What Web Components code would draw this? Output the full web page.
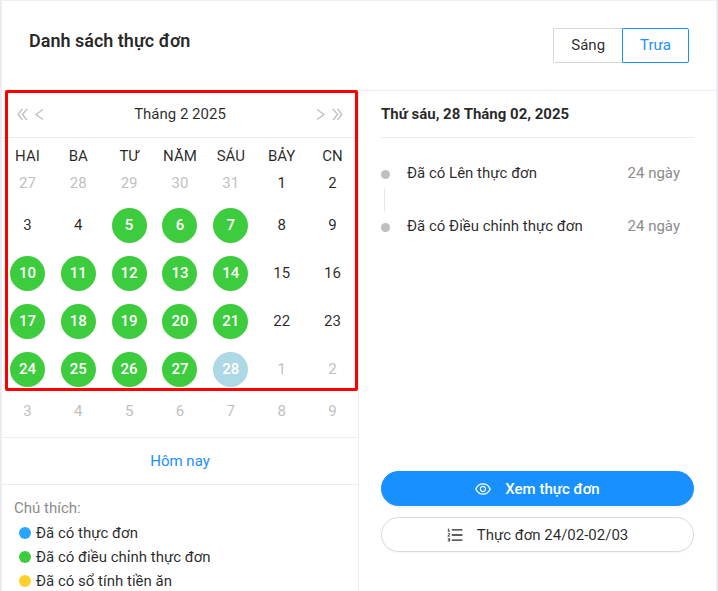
<!DOCTYPE html>
<html lang="vi">
<head>
<meta charset="utf-8">
<meta name="viewport" content="width=device-width, initial-scale=1">
<title>Danh sách thực đơn</title>
<style>
  html {
    background: #ebecf2;
    overflow-x: hidden;
    scrollbar-width: none;
  }

  body {
    margin: 0;
    font: 15px/24px Roboto, "Liberation Sans", sans-serif;
    color: rgba(0, 0, 0, 0.85);
    --line: #ededf0;
    --blue: #1890ff;
    --green: #3dcc3d;
    --muted: #8c8c8c;
    --faint: #bfbfbf;
  }
</style>
</head>
<body>
<menu-card>
  <h1 slot="title">Danh sách thực đơn</h1>
  <meal-switch slot="extra" options="Sáng,Trưa" value="Trưa"></meal-switch>
  <menu-calendar slot="side" year="2025" month="2" selected="28" menu-from="5"></menu-calendar>
  <menu-legend slot="side" heading="Chú thích:">
    <legend-item color="#29a6ff">Đã có thực đơn</legend-item>
    <legend-item color="#3dcc3d">Đã có điều chỉnh thực đơn</legend-item>
    <legend-item color="#ffd02b">Đã có sổ tính tiền ăn</legend-item>
  </menu-legend>
  <day-detail>
    <span slot="date">Thứ sáu, 28 Tháng 02, 2025</span>
    <time-item time="24 ngày">Đã có Lên thực đơn</time-item>
    <time-item time="24 ngày" last>Đã có Điều chỉnh thực đơn</time-item>
    <round-button slot="actions" icon="eye" primary>Xem thực đơn</round-button>
    <round-button slot="actions" icon="list">Thực đơn 24/02-02/03</round-button>
  </day-detail>
</menu-card>

<script>
class MenuCard extends HTMLElement {
  constructor() {
    super();
    const shadow = this.attachShadow({ mode: 'open' });
    shadow.innerHTML = `
    <style>
      :host {
        display: flex;
        flex-direction: column;
        box-sizing: border-box;
        min-height: 100vh;
        margin: 0 2px;
        border-top: 1px solid #f0f0f4;
        background: #fff;
      }

      header {
        display: flex;
        align-items: center;
        justify-content: space-between;
        padding: 27px;
        border-bottom: 1px solid var(--line);
      }

      ::slotted(h1) {
        margin: 0 0 10px;
        font-size: 18px;
        font-weight: 600;
        line-height: 24px;
      }

      .body {
        flex: 1;
        display: grid;
        grid-template-columns: 1fr 1fr;
      }

      .side {
        border-right: 1px solid var(--line);
      }
    </style>
    <header>
      <slot name="title"></slot>
      <slot name="extra"></slot>
    </header>
    <div class="body">
      <div class="side"><slot name="side"></slot></div>
      <slot></slot>
    </div>
`;
  }
}

customElements.define('menu-card', MenuCard);

class MealSwitch extends HTMLElement {
  constructor() {
    super();
    const shadow = this.attachShadow({ mode: 'open' });
    const value = this.getAttribute('value');
    const options = this.getAttribute('options').split(',');
    shadow.innerHTML = `
    <style>
      :host {
        display: block;
      }

      div {
        display: flex;
      }

      input {
        position: absolute;
        opacity: 0;
        margin: 0;
      }

      label {
        padding: 0 17px;
        border: 1px solid #d9d9d9;
        line-height: 33px;
        cursor: pointer;
      }

      label:first-of-type {
        border-right: 0;
        border-radius: 2px 0 0 2px;
      }

      label:last-of-type {
        border-radius: 0 2px 2px 0;
      }

      input:checked + label {
        border-color: var(--blue);
        color: var(--blue);
      }
    </style>
    <div role="radiogroup">
      ${options.map((option, i) => `
        <input type="radio" name="meal" id="meal-${i}" ${option === value ? 'checked' : ''}>
        <label for="meal-${i}">${option}</label>
      `).join('')}
    </div>
`;
  }
}

customElements.define('meal-switch', MealSwitch);

class MenuCalendar extends HTMLElement {
  constructor() {
    super();
    const shadow = this.attachShadow({ mode: 'open' });
    shadow.innerHTML = `
    <style>
      :host {
        display: block;
        position: relative;
      }

      button {
        margin: 0;
        padding: 0;
        border: 0;
        background: none;
        color: inherit;
        font: inherit;
        cursor: pointer;
      }

      nav {
        display: flex;
        align-items: center;
        justify-content: space-between;
        height: 46px;
        padding: 0 14px;
        border-bottom: 1px solid var(--line);
      }

      .arrows {
        display: flex;
        gap: 5px;
      }

      .arrows button {
        display: flex;
        color: var(--faint);
      }

      svg {
        fill: none;
        stroke: currentColor;
        stroke-width: 1.3;
      }

      table {
        width: 100%;
        margin: 9px 0 8px;
        border-collapse: collapse;
        table-layout: fixed;
      }

      th, td {
        padding: 0;
        text-align: center;
        font-weight: 400;
      }

      th {
        line-height: 18px;
      }

      td {
        height: 36px;
      }

      td button {
        width: 35px;
        height: 24px;
      }

      tr.marked td {
        height: 48px;
      }

      .outside {
        color: var(--faint);
      }

      .menu, .selected {
        height: 35px;
        border-radius: 50%;
        background: var(--green);
        color: #fff;
        font-weight: 500;
      }

      .selected {
        background: lightblue;
      }

      .today {
        display: block;
        width: 100%;
        height: 48px;
        border: solid var(--line);
        border-width: 1px 0;
        color: var(--blue);
      }

      .frame {
        position: absolute;
        inset: -1px 0 auto 3px;
        height: 295px;
        border: 3px solid #f00;
        border-radius: 2px;
        pointer-events: none;
      }
    </style>
    <nav>
      <div class="arrows">
        <button aria-label="Năm trước"><svg width="13" height="13" viewBox="0 0 13 13"><path d="M6.5 1 2 6.5 6.5 12M11 1 6.5 6.5 11 12"/></svg></button>
        <button aria-label="Tháng trước"><svg width="11" height="13" viewBox="0 0 11 13"><path d="M9 1.5 2 6.5 9 11.5"/></svg></button>
      </div>
      <span class="month"></span>
      <div class="arrows">
        <button aria-label="Tháng sau"><svg width="11" height="13" viewBox="0 0 11 13"><path d="M2 1.5 9 6.5 2 11.5"/></svg></button>
        <button aria-label="Năm sau"><svg width="13" height="13" viewBox="0 0 13 13"><path d="M2 1 6.5 6.5 2 12M6.5 1 11 6.5 6.5 12"/></svg></button>
      </div>
    </nav>
    <table>
      <thead>
        <tr><th>HAI</th><th>BA</th><th>TƯ</th><th>NĂM</th><th>SÁU</th><th>BẢY</th><th>CN</th></tr>
      </thead>
      <tbody></tbody>
    </table>
    <button class="today">Hôm nay</button>
    <div class="frame"></div>
`;
    this.renderDays();
  }

  renderDays() {
    const year = Number(this.getAttribute('year'));
    const month = Number(this.getAttribute('month'));
    const selected = Number(this.getAttribute('selected'));
    const menuFrom = Number(this.getAttribute('menu-from'));
    // weeks start on Monday
    const offset = (new Date(year, month - 1, 1).getDay() + 6) % 7;
    let rows = '';

    for (let week = 0; week < 6; week++) {
      let cells = '';
      let marked = false;
      for (let day = 0; day < 7; day++) {
        const date = new Date(year, month - 1, 1 - offset + week * 7 + day);
        const number = date.getDate();
        let name = '';
        if (date.getMonth() !== month - 1) {
          name = 'outside';
        } else if (number === selected) {
          name = 'selected';
        } else if (day < 5 && number >= menuFrom) {
          name = 'menu';
        }
        marked = marked || name === 'menu';
        cells += `<td><button class="${name}">${number}</button></td>`;
      }
      rows += `<tr class="${marked ? 'marked' : ''}">${cells}</tr>`;
    }

    this.shadowRoot.querySelector('.month').textContent = `Tháng ${month} ${year}`;
    this.shadowRoot.querySelector('tbody').innerHTML = rows;
  }
}

customElements.define('menu-calendar', MenuCalendar);

class MenuLegend extends HTMLElement {
  constructor() {
    super();
    const shadow = this.attachShadow({ mode: 'open' });
    shadow.innerHTML = `
    <style>
      :host {
        display: block;
        padding: 11px 12px 0;
      }

      .heading {
        margin-bottom: 1px;
        color: var(--muted);
      }
    </style>
    <div class="heading">${this.getAttribute('heading')}</div>
    <slot></slot>
`;
  }
}

customElements.define('menu-legend', MenuLegend);

class LegendItem extends HTMLElement {
  constructor() {
    super();
    const shadow = this.attachShadow({ mode: 'open' });
    shadow.innerHTML = `
    <style>
      :host {
        display: flex;
        align-items: center;
        gap: 5px;
        padding-left: 5px;
      }

      i {
        width: 12px;
        height: 12px;
        border-radius: 50%;
        background: ${this.getAttribute('color')};
      }
    </style>
    <i></i><span><slot></slot></span>
`;
  }
}

customElements.define('legend-item', LegendItem);

class DayDetail extends HTMLElement {
  constructor() {
    super();
    const shadow = this.attachShadow({ mode: 'open' });
    shadow.innerHTML = `
    <style>
      :host {
        display: flex;
        flex-direction: column;
        padding: 0 22px 41px;
      }

      h2 {
        margin: 0 0 23px;
        border-bottom: 1px solid var(--line);
        font-size: 15px;
        font-weight: 700;
        line-height: 46px;
      }

      .actions {
        display: flex;
        flex-direction: column;
        gap: 11px;
        margin-top: auto;
      }
    </style>
    <h2><slot name="date"></slot></h2>
    <slot></slot>
    <div class="actions"><slot name="actions"></slot></div>
`;
  }
}

customElements.define('day-detail', DayDetail);

class TimeItem extends HTMLElement {
  constructor() {
    super();
    const shadow = this.attachShadow({ mode: 'open' });
    shadow.innerHTML = `
    <style>
      :host {
        display: flex;
        min-height: 53px;
        padding-right: 14px;
      }

      .rail {
        display: flex;
        flex-direction: column;
        width: 26px;
        padding: 9px 0 2px;
        box-sizing: border-box;
      }

      .rail::before {
        content: "";
        width: 9px;
        height: 9px;
        border-radius: 50%;
        background: var(--faint);
      }

      .rail::after {
        content: "";
        width: 1px;
        height: 24px;
        margin: 9px 3px 0;
        background: #e8e8e8;
      }

      :host([last]) .rail::after {
        display: none;
      }

      .text {
        flex: 1;
      }

      time {
        color: var(--muted);
      }
    </style>
    <span class="rail"></span>
    <span class="text"><slot></slot></span>
    <time>${this.getAttribute('time')}</time>
`;
  }
}

customElements.define('time-item', TimeItem);

const icons = {
  eye: '<path d="M942.2 486.2C847.4 286.5 704.1 186 512 186c-192.2 0-335.4 100.5-430.2 300.3a60.3 60.3 0 0 0 0 51.5C176.6 737.5 319.9 838 512 838c192.2 0 335.4-100.5 430.2-300.3 7.7-16.2 7.7-35 0-51.5zM512 766c-161.3 0-279.4-81.8-362.7-254C232.6 339.8 350.7 258 512 258c161.3 0 279.4 81.8 362.7 254C791.5 684.2 673.4 766 512 766zm-4-430c-97.2 0-176 78.8-176 176s78.8 176 176 176 176-78.8 176-176-78.8-176-176-176zm0 288c-61.9 0-112-50.1-112-112s50.1-112 112-112 112 50.1 112 112-50.1 112-112 112z"/>',
  list: '<path d="M920 760H336c-4.4 0-8 3.6-8 8v56c0 4.4 3.6 8 8 8h584c4.4 0 8-3.6 8-8v-56c0-4.4-3.6-8-8-8zm0-568H336c-4.4 0-8 3.6-8 8v56c0 4.4 3.6 8 8 8h584c4.4 0 8-3.6 8-8v-56c0-4.4-3.6-8-8-8zm0 284H336c-4.4 0-8 3.6-8 8v56c0 4.4 3.6 8 8 8h584c4.4 0 8-3.6 8-8v-56c0-4.4-3.6-8-8-8z"/><path d="M110 172h50v130M100 302h120M110 440h100v55L110 560v20h110M105 720h110v132H105M130 786h85" fill="none" stroke="currentColor" stroke-width="44"/>'
};

class RoundButton extends HTMLElement {
  constructor() {
    super();
    const shadow = this.attachShadow({ mode: 'open' });
    shadow.innerHTML = `
    <style>
      :host {
        display: block;
      }

      button {
        display: flex;
        align-items: center;
        justify-content: center;
        gap: 14px;
        width: 100%;
        height: 35px;
        padding: 0;
        border: 1px solid #d9d9d9;
        border-radius: 18px;
        background: #fff;
        box-shadow: 0 2px 0 rgba(0, 0, 0, 0.02);
        color: inherit;
        font: inherit;
        cursor: pointer;
      }

      :host([primary]) button {
        border-color: var(--blue);
        background: var(--blue);
        box-shadow: 0 2px 0 rgba(0, 0, 0, 0.04);
        color: #fff;
        font-weight: 500;
      }

      svg {
        fill: currentColor;
      }
    </style>
    <button>
      <svg width="16" height="16" viewBox="64 64 896 896" aria-hidden="true">${icons[this.getAttribute('icon')]}</svg>
      <span><slot></slot></span>
    </button>
`;
  }
}

customElements.define('round-button', RoundButton);
</script>
</body>
</html>
